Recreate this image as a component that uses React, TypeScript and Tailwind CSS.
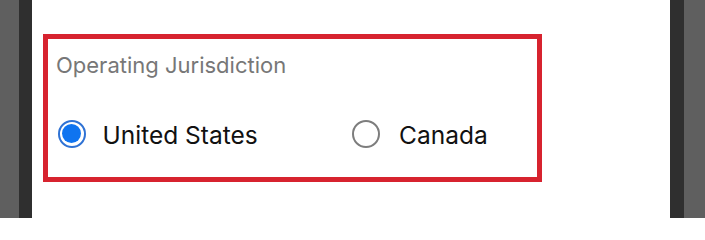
export default function App() {
  return (
    <div className="flex h-[218px] w-[705px] bg-white font-['Inter',sans-serif]">
      <div className="w-[19px] bg-[#5f5f5f]" />
      <div className="w-[13px] bg-[#2f2f2f]" />

      <div className="flex-1 bg-white pl-[11px] pt-[34px]">
        <div className="h-[148px] w-[499px] border-[5px] border-[#d7232f] pl-[8px] pt-[12px]">
          <div className="text-[22px] leading-[28px] text-[#777777]">Operating Jurisdiction</div>

          <div className="mt-[39px] flex items-center">
            <label className="flex w-[296px] items-center gap-[17px] pl-[1.5px]">
              <span className="flex h-[28px] w-[28px] items-center justify-center rounded-full border-2 border-[#2f72d4]">
                <span className="h-[19px] w-[19px] rounded-full bg-[#0f74f0]" />
              </span>
              <span className="mt-[3px] text-[24.5px] leading-[28px] text-[#111111]">United States</span>
            </label>
            <label className="flex items-center gap-[19px]">
              <span className="h-[28px] w-[28px] rounded-full border-2 border-[#7d7d7d]" />
              <span className="mt-[3px] text-[24.5px] leading-[28px] text-[#111111]">Canada</span>
            </label>
          </div>
        </div>
      </div>

      <div className="w-[14px] bg-[#2f2f2f]" />
      <div className="w-[21px] bg-[#5f5f5f]" />
    </div>
  );
}
